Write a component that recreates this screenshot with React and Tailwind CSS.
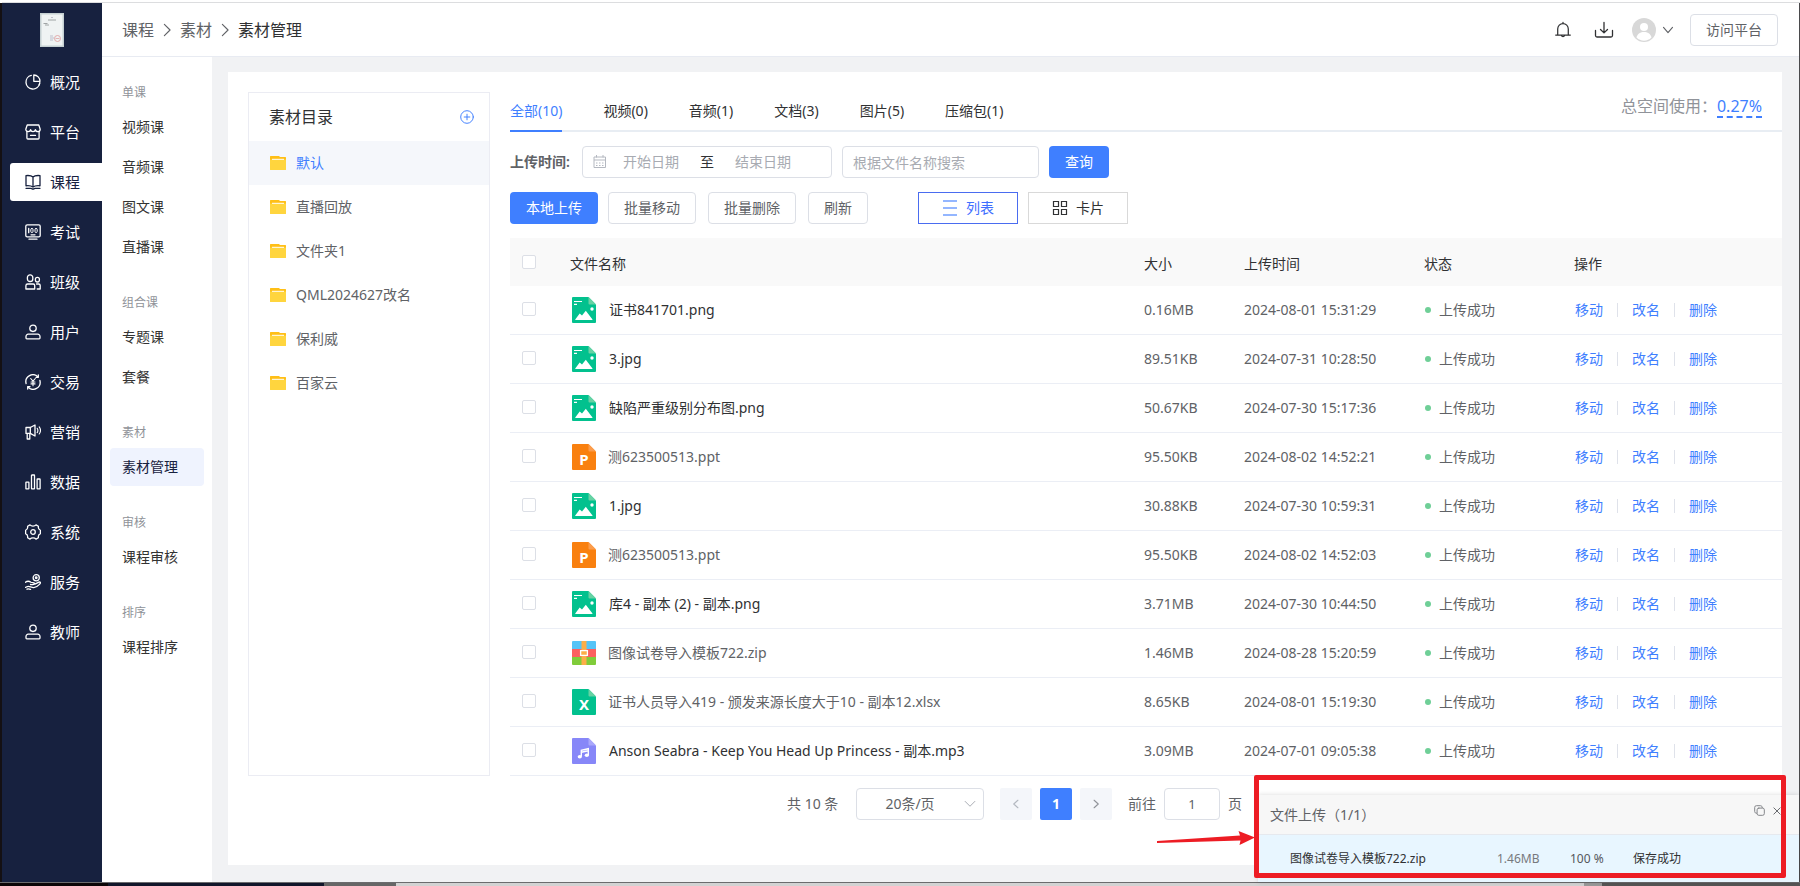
import React from "react";

const Svg = ({ children, className = "size-4", sw = 1.3 }) => (
  <svg viewBox="0 0 16 16" className={className} fill="none" stroke="currentColor" strokeWidth={sw} strokeLinecap="round" strokeLinejoin="round" aria-hidden="true">
    {children}
  </svg>
);

const userShape = (
  <>
    <circle cx="8" cy="4.3" r="3.2" />
    <path d="M3.2 10.2h9.6a2.2 2.2 0 0 1 2.2 2.2v1.6a.8.8 0 0 1-.8.8H1.8a.8.8 0 0 1-.8-.8v-1.6a2.2 2.2 0 0 1 2.2-2.2z" />
  </>
);

const icons = {
  overview: (
    <>
      <path d="M6.3 1.4a6.9 6.9 0 1 0 8.3 8.3" />
      <path d="M8.8 1v6.3h6.2A6.3 6.3 0 0 0 8.8 1z" />
      <path d="M14.8 8.5a7 7 0 0 1-.6 2.4" />
    </>
  ),
  platform: (
    <>
      <path d="M2.2 1h11.6l1.4 4.2c0 1.5-1 2.4-2.2 2.4S10.6 6.8 10.4 5.6C10.2 6.8 9.3 7.6 8 7.6S5.8 6.8 5.6 5.6C5.4 6.800 4.400 7.600 3.200 7.600S.8 6.700.8 5.200z" />
      <path d="M1.9 7.500V14a1 1 0 0 0 1 1h10.200a1 1 0 0 0 1-1V7.500M5.500 11.400h5" />
    </>
  ),
  course: (
    <>
      <path d="M8 3C6.500 1.600 4 1.300 1 1.600v10.200c3-.3 5.500.1 7 1.300 1.500-1.200 4-1.600 7-1.300V1.600C12 1.300 9.500 1.600 8 3zM8 3v10" />
      <path d="M1 14.300h4.800c.8 0 1.200.8 2.200.8s1.400-.8 2.200-.8H15" />
    </>
  ),
  exam: (
    <>
      <rect x=".8" y=".8" width="14.400" height="12" rx="1.400" />
      <path d="M3.700 4.500v4.200M4 15.200h8M6 10.800h4" />
      <rect x="5.800" y="4.500" width="2.200" height="4" rx="1" strokeWidth="1" />
      <rect x="10" y="4.500" width="2.200" height="4" rx="1" strokeWidth="1" />
    </>
  ),
  classes: (
    <>
      <rect x="2.400" y=".9" width="5.400" height="6.600" rx="2.600" />
      <rect x="10.400" y="3.400" width="4" height="4.600" rx="1.900" />
      <path d="M2.600 10h5.600a1.500 1.500 0 0 1 1.500 1.500V15H.9v-3.300A1.700 1.700 0 0 1 2.600 10zM11.500 10h2.100c.9 0 1.600.7 1.600 1.600V15h-3" />
    </>
  ),
  user: userShape,
  trade: (
    <>
      <path d="M1.100 9.500A7 7 0 0 1 13 3M14.900 6.500A7 7 0 0 1 3 13" />
      <path d="M13.300 1v2.300H11M2.700 15v-2.300H5" />
      <path d="M5.700 4.500L8 7.200l2.300-2.700M8 7.200v4.600M6 8h4M6 9.900h4" strokeWidth="1.100" />
    </>
  ),
  marketing: (
    <>
      <path d="M1 3.500h4.300L10 1v11L5.300 9.400H1zM2.200 9.600V15h2.600V9.600M5.300 3.500v5.800" />
      <path d="M12.200 4.300c.8 1.200.8 3 0 4.300M14.200 2.900c1.500 2 1.500 5 0 7.100" strokeWidth="1.100" />
    </>
  ),
  data: (
    <>
      <rect x=".9" y="8.200" width="3" height="6.600" rx=".4" />
      <rect x="6.500" y="1" width="3" height="13.800" rx=".4" />
      <rect x="12.100" y="5" width="3" height="9.800" rx=".4" />
    </>
  ),
  system: (
    <>
      <path d="M5 .9c.7.8 1.800 1.200 3 1.200s2.300-.4 3-1.200l2.400 1.400c-.4 2.200.3 3.300 2 4v3.400c-1.700.7-2.400 1.800-2 4L11 15.100c-.7-.8-1.800-1.200-3-1.200s-2.300.4-3 1.200l-2.400-1.400c.4-2.200-.3-3.300-2-4V6.300c1.700-.7 2.400-1.800 2-4z" />
      <circle cx="8" cy="8" r="2.300" />
    </>
  ),
  service: (
    <>
      <circle cx="11.200" cy="3.800" r="3.100" />
      <circle cx="11.200" cy="3.800" r=".8" />
      <path d="M.4 8.300c2-1.600 3.800-1.300 5.600 0 1 .6 3.600-.1 3.500 1.300-.1 1.300-2.400 1.200-4 .9M9.300 10.200c2.400-.1 4-2.500 5.600-2.200 1 .4.500 1.500-.4 2.400-1.700 1.800-3.300 3.200-5.800 3.300-2.200 0-3.700-1.300-5.200-1.300-1.200 0-2 .5-3 1" />
      <path d="M2 15.200c1.200-.6 2.500-.2 3.600.1" />
    </>
  ),
};

const mainNav = [
  ["overview", "概况"], ["platform", "平台"], ["course", "课程"], ["exam", "考试"],
  ["classes", "班级"], ["user", "用户"], ["trade", "交易"], ["marketing", "营销"],
  ["data", "数据"], ["system", "系统"], ["service", "服务"], ["user", "教师"],
];

const subNav = [
  ["单课", ["视频课", "音频课", "图文课", "直播课"]],
  ["组合课", ["专题课", "套餐"]],
  ["素材", ["素材管理"]],
  ["审核", ["课程审核"]],
  ["排序", ["课程排序"]],
];

const folders = ["默认", "直播回放", "文件夹1", "QML2024627改名", "保利威", "百家云"];
const tabs = ["全部(10)", "视频(0)", "音频(1)", "文档(3)", "图片(5)", "压缩包(1)"];

const files = [
  ["image", "证书841701.png", "0.16MB", "2024-08-01 15:31:29"],
  ["image", "3.jpg", "89.51KB", "2024-07-31 10:28:50"],
  ["image", "缺陷严重级别分布图.png", "50.67KB", "2024-07-30 15:17:36"],
  ["ppt", "测623500513.ppt", "95.50KB", "2024-08-02 14:52:21"],
  ["image", "1.jpg", "30.88KB", "2024-07-30 10:59:31"],
  ["ppt", "测623500513.ppt", "95.50KB", "2024-08-02 14:52:03"],
  ["image", "库4 - 副本 (2) - 副本.png", "3.71MB", "2024-07-30 10:44:50"],
  ["zip", "图像试卷导入模板722.zip", "1.46MB", "2024-08-28 15:20:59"],
  ["xlsx", "证书人员导入419 - 颁发来源长度大于10 - 副本12.xlsx", "8.65KB", "2024-08-01 15:19:30"],
  ["audio", "Anson Seabra - Keep You Head Up Princess - 副本.mp3", "3.09MB", "2024-07-01 09:05:38"],
];

const Sheet = ({ color, fold, children }) => (
  <svg viewBox="0 0 24 26" className="h-[26px] w-6 shrink-0" aria-hidden="true">
    <path d="M1 0h15.500L24 7.500V25a1 1 0 0 1-1 1H1a1 1 0 0 1-1-1V1a1 1 0 0 1 1-1z" fill={color} />
    <path d="M16.500 0L24 7.500h-6.500a1 1 0 0 1-1-1z" fill={fold} />
    {children}
  </svg>
);

function FileIcon({ type }) {
  if (type === "image")
    return (
      <Sheet color="#02c18e" fold="#67d2a3">
        <path d="M2 4.500h8M2 7.300h3" stroke="#fff" strokeWidth="1.200" />
        <circle cx="20" cy="12" r="1.700" fill="#fff" />
        <path d="M3.200 22.500l4.500-6 2.300 2 3.800-4.700 6.700 8.700a.4.400 0 0 1-.3.500H3.500a.4.400 0 0 1-.3-.5z" fill="#fff" />
      </Sheet>
    );
  if (type === "ppt")
    return (
      <Sheet color="#f9800f" fold="#fb9c4c">
        <text x="12" y="21" textAnchor="middle" fontSize="15" fontWeight="700" fill="#fff">P</text>
      </Sheet>
    );
  if (type === "xlsx")
    return (
      <Sheet color="#02c18e" fold="#67d2a3">
        <text x="12" y="21" textAnchor="middle" fontSize="15" fontWeight="700" fill="#fff">X</text>
      </Sheet>
    );
  if (type === "audio")
    return (
      <Sheet color="#8787f8" fold="#a9a7fb">
        <path d="M9.300 18.500v-6.200l7-1.600v6.300M9.300 14.300l7-1.600" stroke="#fff" strokeWidth="1.400" fill="none" />
        <ellipse cx="7.800" cy="18.800" rx="2.100" ry="1.700" fill="#fff" />
        <ellipse cx="14.800" cy="17.300" rx="2.100" ry="1.700" fill="#fff" />
      </Sheet>
    );
  return (
    <svg viewBox="0 0 24 26" className="h-[26px] w-6 shrink-0" aria-hidden="true">
      <path d="M1 1h22a1 1 0 0 1 1 1v7H0V2a1 1 0 0 1 1-1z" fill="#55c4f7" />
      <path d="M0 9h24v8H0z" fill="#fb6060" />
      <path d="M0 17h24v7a1 1 0 0 1-1 1H1a1 1 0 0 1-1-1z" fill="#80cc3a" />
      <path d="M9.500 1h5v24h-5z" fill="#fcae48" />
      <rect x="8.600" y="10.600" width="6.800" height="4.800" fill="#fcae48" stroke="#fff" strokeWidth="1.300" />
    </svg>
  );
}

const Checkbox = ({ label }) => (
  <input type="checkbox" aria-label={label} className="block size-[14px] appearance-none rounded-[2px] border border-[#dcdfe6] bg-white" />
);

const plainBtn = "h-8 rounded border border-[#dcdfe6] bg-white text-sm text-[#606266]";

export default function App() {
  return (
    <div className="relative flex min-h-screen flex-col overflow-x-hidden bg-white font-['Noto_Sans','Noto_Sans_CJK_SC',sans-serif] text-sm leading-5 text-[#606266]">
      <div className="ml-0.5 h-[3px] border-b border-[#dcdddf] bg-white" />
      <div className="flex grow border-r border-l-2 border-[#4a4a4c] border-l-[#141013]">
        <nav className="flex w-[100px] shrink-0 flex-col bg-[#17213f] pt-2.5">
          <svg viewBox="0 0 24 34" className="ml-[38px] h-[34px] w-6 shrink-0" role="img" aria-label="证书">
            <rect width="24" height="34" fill="#c5d0d2" />
            <rect x="1.500" y="1.500" width="21" height="31" fill="#eff3f3" />
            <path d="M8 7h8M3.500 10.500h4M5 12h4" stroke="#8b8f90" strokeWidth=".8" />
            <path d="M11 4.500h2M10 23h3M10 25h4M10 27h3" stroke="#aab" strokeWidth=".7" />
            <circle cx="17.500" cy="25.500" r="3" fill="none" stroke="#dfa3a3" strokeWidth=".9" />
            <path d="M15.500 25.500h4" stroke="#dfa3a3" strokeWidth=".8" />
          </svg>
          <ul className="mt-4 flex flex-col gap-3 pl-2">
            {mainNav.map(([icon, label], i) => (
              <li key={label}>
                <a
                  href="#"
                  className={
                    i === 2
                      ? "flex h-[38px] items-center gap-[9px] rounded-l-[3px] bg-white pl-[15px] text-[15px] text-[#17213f]"
                      : "flex h-[38px] items-center gap-[9px] pl-[15px] text-[15px] text-white"
                  }
                >
                  <Svg>{icons[icon]}</Svg>
                  {label}
                </a>
              </li>
            ))}
          </ul>
        </nav>

        <div className="flex min-w-0 grow flex-col">
          <header className="flex h-[54px] items-center border-b border-[#e8ebf2] pr-[21px] pl-5">
            <nav aria-label="面包屑" className="flex items-center gap-1.5 text-base text-[#606266]">
              <a href="#">课程</a>
              <Svg className="h-[14px] w-[14px]">
                <path d="M5 1.500L11.500 8 5 14.500" />
              </Svg>
              <a href="#">素材</a>
              <Svg className="h-[14px] w-[14px]">
                <path d="M5 1.500L11.500 8 5 14.500" />
              </Svg>
              <span className="text-[#303133]">素材管理</span>
            </nav>
            <div className="ml-auto flex items-center">
              <button aria-label="通知" className="mr-[22px] text-[#303133]">
                <Svg className="size-[18px]" sw={1.1}>
                  <path d="M1.500 12.500h13M3.300 12.300V7a4.700 4.700 0 0 1 9.400 0v5.300M8 2.200v-1M6.600 13a1.500 1.500 0 0 0 2.800 0" />
                </Svg>
              </button>
              <button aria-label="下载" className="mr-[18px] text-[#303133]">
                <svg viewBox="0 0 20 18" className="h-[18px] w-5" fill="none" stroke="currentColor" strokeWidth="1.300" strokeLinecap="round" strokeLinejoin="round" aria-hidden="true">
                  <path d="M10 1.500v10M6.500 8.500l3.500 3.400 3.500-3.400M1.500 9.500v5a1.500 1.500 0 0 0 1.500 1.500h14a1.500 1.500 0 0 0 1.500-1.500v-5" />
                </svg>
              </button>
              <button aria-label="账户" className="mr-4 flex items-center gap-1.5">
                <svg viewBox="0 0 24 24" className="size-6" aria-hidden="true">
                  <circle cx="12" cy="12" r="12" fill="#d8d8d8" />
                  <circle cx="12" cy="9" r="4" fill="#fff" />
                  <path d="M4.500 19.500c1-4 4-5.500 7.500-5.500s6.500 1.500 7.500 5.500a10.500 10.500 0 0 1-15 0z" fill="#fff" />
                </svg>
                <Svg className="h-3 w-3" sw={1.500}>
                  <path d="M2 4.500l6 7 6-7" />
                </Svg>
              </button>
              <button className={plainBtn + " w-[88px]"}>访问平台</button>
            </div>
          </header>

          <div className="flex grow bg-[#f1f2f4]">
            <nav aria-label="课程菜单" className="w-[110px] shrink-0 bg-white px-2 pt-[27px]">
              {subNav.map(([title, items]) => (
                <section key={title} className="mb-7">
                  <h2 className="mb-1.5 px-3 text-xs leading-[18px] text-[#909399]">{title}</h2>
                  <ul className="flex flex-col gap-0.5">
                    {items.map((t) => (
                      <li key={t}>
                        <a
                          href="#"
                          className={
                            t === "素材管理"
                              ? "flex h-[38px] items-center rounded bg-[#eff3fe] px-3 text-[#17213f]"
                              : "flex h-[38px] items-center px-3 text-[#333333]"
                          }
                        >
                          {t}
                        </a>
                      </li>
                    ))}
                  </ul>
                </section>
              ))}
            </nav>

            <main className="mt-[15px] mr-[17px] mb-[17px] ml-4 flex min-w-0 grow gap-5 bg-white pt-5 pb-[45px] pl-5">
              <aside className="mb-11 w-[242px] shrink-0 border border-[#ebecf3]">
                <div className="flex h-12 items-center justify-between pr-[15px] pl-5">
                  <h1 className="text-base text-[#303133]">素材目录</h1>
                  <button aria-label="新建目录" className="text-[#3f7fff]">
                    <Svg className="size-[14px]" sw={1.100}>
                      <circle cx="8" cy="8" r="7.200" />
                      <path d="M8 4.800v6.400M4.800 8h6.400" />
                    </Svg>
                  </button>
                </div>
                <ul>
                  {folders.map((f, i) => (
                    <li key={f}>
                      <a
                        href="#"
                        className={
                          i === 0
                            ? "flex h-11 items-center gap-2.5 bg-[#f5f7fb] pl-[21px] text-[#3f7fff]"
                            : "flex h-11 items-center gap-2.5 pl-[21px]"
                        }
                      >
                        <svg viewBox="0 0 16 14" className="h-[14px] w-4" aria-hidden="true">
                          <path d="M.6 0h8.200l1.400 1h5.200a.6.600 0 0 1 .6.600V7H0V.6A.6.600 0 0 1 .6 0z" fill="#ffbf16" />
                          <path d="M0 3.500h16v9.900a.6.600 0 0 1-.6.600H.6a.6.600 0 0 1-.6-.6z" fill="#ffd53e" />
                          <path d="M2 3.300h12" stroke="#fff" strokeWidth="1" />
                        </svg>
                        {f}
                      </a>
                    </li>
                  ))}
                </ul>
              </aside>

              <section className="min-w-0 grow">
                <div className="flex h-10 items-stretch border-b-2 border-[#e8edf3]">
                  <div role="tablist" className="flex gap-[41px]">
                    {tabs.map((t, i) => (
                      <button
                        role="tab"
                        aria-selected={i === 0}
                        key={t}
                        className={
                          i === 0
                            ? "-mb-0.5 border-b-2 border-[#3f7fff] text-[#3f7fff]"
                            : "-mb-0.5 border-b-2 border-transparent text-[#303133]"
                        }
                      >
                        {t}
                      </button>
                    ))}
                  </div>
                  <div className="mr-5 ml-auto flex items-start pt-1 text-base leading-5 text-[#909399]">
                    <span>总空间使用：</span>
                    <a href="#" className="border-b-2 border-dashed border-[#3f7fff] text-[#3f7fff]">0.27%</a>
                  </div>
                </div>

                <form className="mt-3.5 flex items-center" onSubmit={(e) => e.preventDefault()}>
                  <label htmlFor="start" className="w-[72px] text-sm font-semibold">上传时间:</label>
                  <div className="flex h-8 w-[250px] items-center rounded border border-[#dcdfe6] pl-2.5">
                    <svg viewBox="0 0 14 14" className="mr-1.5 h-[14px] w-[14px] shrink-0 text-[#b4b8c0]" fill="none" stroke="currentColor" aria-hidden="true">
                      <path d="M1 2h11.500v10.500H1zM1 5h11.500M3.500 0v2.500M10 0v2.500M3 8h1.500M6 8h1.500M9 8h1.500M3 10.500h1.500M6 10.500h1.500M9 10.500h1.500" />
                    </svg>
                    <input id="start" placeholder="开始日期" className="w-[76px] text-center text-sm outline-none placeholder:text-[#a8abb2]" />
                    <span className="w-9 text-center text-[#303133]">至</span>
                    <input aria-label="结束日期" placeholder="结束日期" className="w-[76px] text-center text-sm outline-none placeholder:text-[#a8abb2]" />
                  </div>
                  <input aria-label="文件名称" placeholder="根据文件名称搜索" className="ml-2.5 h-8 w-[197px] rounded border border-[#dcdfe6] px-2.5 text-sm outline-none placeholder:text-[#a8abb2]" />
                  <button className="ml-2.5 h-8 w-[60px] rounded bg-[#3f7fff] text-sm text-white">查询</button>
                </form>

                <div className="mt-3.5 flex items-center">
                  <button className="h-8 w-[88px] rounded bg-[#3f7fff] text-sm text-white">本地上传</button>
                  <button className={plainBtn + " ml-2.5 w-[88px]"}>批量移动</button>
                  <button className={plainBtn + " ml-3 w-[88px]"}>批量删除</button>
                  <button className={plainBtn + " ml-3 w-[60px]"}>刷新</button>
                  <button className="ml-[50px] flex h-8 w-[100px] items-center justify-center gap-2 border border-[#4a6cf0] text-sm text-[#3f6fff]">
                    <svg viewBox="0 0 16 16" className="size-4" fill="none" stroke="#94b6ff" strokeWidth="2" aria-hidden="true">
                      <path d="M1 1h14M1 8h14M1 15h14" />
                    </svg>
                    列表
                  </button>
                  <button className="ml-2.5 flex h-8 w-[100px] items-center justify-center gap-2 border border-[#d9d9d9] text-sm text-[#303133]">
                    <svg viewBox="0 0 16 16" className="size-4" fill="none" stroke="currentColor" strokeWidth="1.200" aria-hidden="true">
                      <path d="M1.500 1.500h5v5h-5zM9.500 1.500h5v5h-5zM1.500 9.500h5v5h-5zM9.500 9.500h5v5h-5z" />
                    </svg>
                    卡片
                  </button>
                </div>

                <table className="mt-3.5 w-full table-fixed border-separate border-spacing-0 text-left">
                  <thead>
                    <tr className="h-12 bg-[#f9f9f9] text-[#303133] [&>th]:p-0 [&>th]:pt-[3px] [&>th]:font-normal">
                      <th className="w-[60px]"><div className="pb-1 pl-3"><Checkbox label="全选" /></div></th>
                      <th>文件名称</th>
                      <th className="w-[638px]">
                        <div className="grid grid-cols-[100px_180px_150px_1fr]">
                          <span>大小</span><span>上传时间</span><span>状态</span><span>操作</span>
                        </div>
                      </th>
                    </tr>
                  </thead>
                  <tbody>
                    {files.map(([type, name, size, time], i) => (
                      <tr key={i} className="h-[49px] [&>td]:border-b [&>td]:border-[#ebeef5] [&>td]:p-0">
                        <td><div className="pb-0.5 pl-3"><Checkbox label={name} /></div></td>
                        <td>
                          <div className={type === "image" || type === "audio" ? "flex items-center gap-[13px] pl-0.5 text-[#303133]" : "flex items-center gap-3 pl-0.5"}>
                            <FileIcon type={type} />
                            {name}
                          </div>
                        </td>
                        <td>
                          <div className="grid grid-cols-[100px_180px_150px_1fr] items-center">
                            <span>{size}</span>
                            <span>{time}</span>
                            <span className="flex items-center gap-2 pl-px">
                              <i className="size-1.5 rounded-full bg-[#6fcf97]" />
                              上传成功
                            </span>
                            <span className="flex items-center gap-3.5 pl-px text-[#3f7fff]">
                              <a href="#">移动</a>
                              <i className="h-3.5 w-px bg-[#dfe2ea]" />
                              <a href="#">改名</a>
                              <i className="h-3.5 w-px bg-[#dfe2ea]" />
                              <a href="#">删除</a>
                            </span>
                          </div>
                        </td>
                      </tr>
                    ))}
                  </tbody>
                </table>

                <div className="mt-3 flex items-center pl-[277px]">
                  <span className="w-[69px]">共 10 条</span>
                  <div className="relative mr-4">
                    <select aria-label="每页条数" className="h-8 w-32 appearance-none rounded border border-[#dcdfe6] bg-white pr-5 text-center text-sm [text-align-last:center]">
                      <option>20条/页</option>
                    </select>
                    <Svg className="pointer-events-none absolute top-2.5 right-2 h-3 w-3 text-[#a8abb2]">
                      <path d="M1.500 4.500L8 11l6.500-6.500" />
                    </Svg>
                  </div>
                  <div className="flex gap-2">
                    <button aria-label="上一页" className="flex size-8 items-center justify-center rounded-[2px] bg-[#f4f6fa] text-[#b4b8c0]">
                      <Svg className="h-3 w-3" sw={1.500}><path d="M10.500 3L5 8l5.500 5" /></Svg>
                    </button>
                    <button className="size-8 rounded-[2px] bg-[#3f7fff] text-sm font-bold text-white">1</button>
                    <button aria-label="下一页" className="flex size-8 items-center justify-center rounded-[2px] bg-[#f4f6fa] text-[#909399]">
                      <Svg className="h-3 w-3" sw={1.500}><path d="M5.500 3L11 8l-5.500 5" /></Svg>
                    </button>
                  </div>
                  <label className="ml-4 flex items-center gap-2">
                    前往
                    <input defaultValue="1" className="h-8 w-14 rounded border border-[#dcdfe6] text-center text-[13px] outline-none" />
                    页
                  </label>
                </div>
              </section>
            </main>
          </div>
        </div>
      </div>

      <div className="flex h-1 border-t border-[#6b6b6d]" aria-hidden="true">
        <div className="w-[6%] bg-[#0c0607]" />
        <div className="w-[12%] bg-[#11162a]" />
        <div className="w-[4%] bg-[#666666]" />
        <div className="grow bg-[#d2d2d2]" />
        <div className="w-[1%] bg-[#999999]" />
        <div className="w-[11%] bg-[#565656]" />
      </div>

      <section aria-label="文件上传" className="absolute right-px bottom-1 w-[541px] bg-[#e8f6ff] shadow-[0_0_5px_rgba(0,0,0,0.15)]">
        <div className="flex h-10 items-center border-b border-[#e6e9ee] bg-[#f7f7f7] pr-[17px] pl-3">
          <h2 className="text-sm">文件上传（1/1）</h2>
          <button aria-label="还原" className="mr-[7px] mb-2 ml-auto text-[#808286]">
            <Svg className="h-[11px] w-[11px]" sw={1.400}>
              <rect x="4.500" y="4.500" width="10.500" height="10.500" rx="2.500" />
              <path d="M4 12C2 12 1 11 1 9.500V3.500A2.500 2.500 0 0 1 3.500 1h6C11 1 12 2 12 4" />
            </Svg>
          </button>
          <button aria-label="关闭" className="mb-2 text-[#606266]">
            <Svg className="h-[10px] w-[10px]" sw={1.500}>
              <path d="M3 3l10 10M13 3L3 13" />
            </Svg>
          </button>
        </div>
        <div className="flex h-[47px] items-center pl-8 text-xs text-[#303133]">
          <span className="w-[207px]">图像试卷导入模板722.zip</span>
          <span className="w-[73px] text-[#77797d]">1.46MB</span>
          <span className="w-[63px] text-[#55575c]">100 %</span>
          <span>保存成功</span>
        </div>
      </section>

      <div className="pointer-events-none absolute right-3.5 bottom-2 h-[103px] w-[532px] rounded-[2px] border-[5px] border-[#ed1c24]" />
      <svg viewBox="0 0 100 16" className="pointer-events-none absolute right-[544px] bottom-10 h-4 w-[100px]" fill="#ed1c24" aria-hidden="true">
        <path d="M1 11L84 5.500 82.500 1 99 7.500 83.500 15l1-4.500L1 13z" />
      </svg>
    </div>
  );
}
